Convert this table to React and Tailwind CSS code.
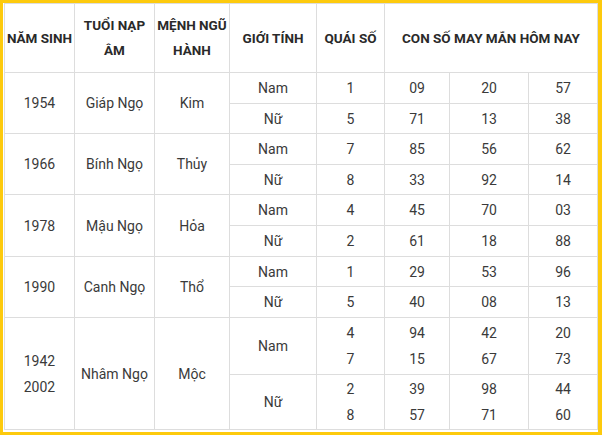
import React from "react";

const groups = [
  {
    year: ["1954"],
    tuoi: "Giáp Ngọ",
    menh: "Kim",
    rows: [
      { sex: "Nam", qs: ["1"], nums: [["09"], ["20"], ["57"]] },
      { sex: "Nữ", qs: ["5"], nums: [["71"], ["13"], ["38"]] },
    ],
  },
  {
    year: ["1966"],
    tuoi: "Bính Ngọ",
    menh: "Thủy",
    rows: [
      { sex: "Nam", qs: ["7"], nums: [["85"], ["56"], ["62"]] },
      { sex: "Nữ", qs: ["8"], nums: [["33"], ["92"], ["14"]] },
    ],
  },
  {
    year: ["1978"],
    tuoi: "Mậu Ngọ",
    menh: "Hỏa",
    rows: [
      { sex: "Nam", qs: ["4"], nums: [["45"], ["70"], ["03"]] },
      { sex: "Nữ", qs: ["2"], nums: [["61"], ["18"], ["88"]] },
    ],
  },
  {
    year: ["1990"],
    tuoi: "Canh Ngọ",
    menh: "Thổ",
    rows: [
      { sex: "Nam", qs: ["1"], nums: [["29"], ["53"], ["96"]] },
      { sex: "Nữ", qs: ["5"], nums: [["40"], ["08"], ["13"]] },
    ],
  },
  {
    year: ["1942", "2002"],
    tuoi: "Nhâm Ngọ",
    menh: "Mộc",
    rows: [
      { sex: "Nam", qs: ["4", "7"], nums: [["94", "15"], ["42", "67"], ["20", "73"]] },
      { sex: "Nữ", qs: ["2", "8"], nums: [["39", "57"], ["98", "71"], ["44", "60"]] },
    ],
  },
];

function Cell({ children, className = "" }) {
  return (
    <div className={"bg-white flex flex-col items-center justify-center text-center " + className}>
      {children}
    </div>
  );
}

function Head({ children, className = "" }) {
  return (
    <Cell className={"font-bold text-[13.5px] text-[#2a2a2a] leading-[25px] " + className}>{children}</Cell>
  );
}

function Lines({ items }) {
  return items.map((t, i) => <span key={i}>{t}</span>);
}

export default function App() {
  return (
    <div
      className="w-[602px] h-[435px] bg-white border-[#fdca0d] border-t-[3px] border-l-[3px] border-r-[4px] border-b-[3px] pl-px"
      style={{ fontFamily: "Roboto, 'Liberation Sans', sans-serif" }}
    >
      <div className="w-[594px] grid grid-cols-[69px_79px_74px_86px_67px_64px_78px_68px] grid-rows-[68px_30px_29px_30px_29px_30px_30px_29px_30px_56px_54px] gap-px bg-[#dddddd] border border-[#dddddd] text-[14px] text-[#3a3a3a] leading-[26px]">
        <Head>NĂM SINH</Head>
        <Head>
          <span>TUỔI NẠP</span>
          <span>ÂM</span>
        </Head>
        <Head>
          <span>MỆNH NGŨ</span>
          <span>HÀNH</span>
        </Head>
        <Head>GIỚI TÍNH</Head>
        <Head>QUÁI SỐ</Head>
        <Head className="col-span-3">CON SỐ MAY MẮN HÔM NAY</Head>
        {groups.map((g) => (
          <React.Fragment key={g.year.join()}>
            <Cell className="row-span-2">
              <Lines items={g.year} />
            </Cell>
            <Cell className="row-span-2">{g.tuoi}</Cell>
            <Cell className="row-span-2">{g.menh}</Cell>
            {g.rows.map((r) => (
              <React.Fragment key={r.sex}>
                <Cell>{r.sex}</Cell>
                <Cell>
                  <Lines items={r.qs} />
                </Cell>
                {r.nums.map((n, i) => (
                  <Cell key={i}>
                    <Lines items={n} />
                  </Cell>
                ))}
              </React.Fragment>
            ))}
          </React.Fragment>
        ))}
      </div>
    </div>
  );
}
